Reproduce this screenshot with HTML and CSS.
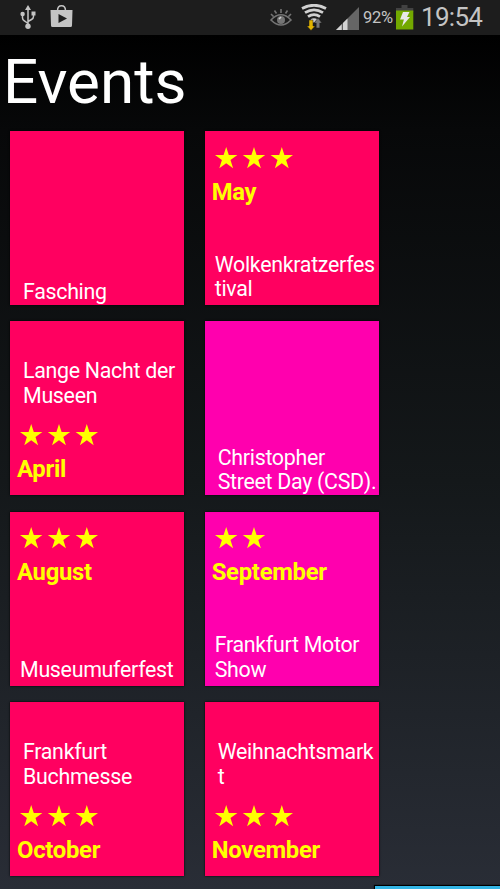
FILE: index.html
```html
<!DOCTYPE html>
<html lang="de">
<head>
<meta charset="utf-8">
<title>Events</title>
<link rel="stylesheet" href="styles.css">
</head>
<body>
<svg class="defs" width="0" height="0"><defs>
<path id="star" d="M11.2 0 L13.8 8 H22.4 L15.5 13 L18.1 21.2 L11.2 16.2 L4.3 21.2 L6.9 13 L0 8 H8.6Z"/>
<symbol id="stars3" viewBox="0 0 79 22"><use href="#star"/><use href="#star" x="27.8"/><use href="#star" x="55.6"/></symbol>
<symbol id="stars2" viewBox="0 0 79 22"><use href="#star"/><use href="#star" x="27.8"/></symbol>
</defs></svg>
<header class="status">
  <svg class="usb" width="16" height="25" viewBox="0 0 16 25" fill="none" stroke="#c4c4c4" stroke-width="1.5"><path d="M8 4V22M2.5 9v4q0 2 2 3L8 18.5M13.5 8v3.5q0 2-2 3L8 16.5"/><path d="M8 0L11 5H5ZM11.5 6.5h4v4h-4Z" fill="#c4c4c4" stroke="none"/><circle cx="2.6" cy="9" r="2.2" fill="#c4c4c4" stroke="none"/><circle cx="8" cy="21.3" r="2.7" fill="#c4c4c4" stroke="none"/></svg>
  <svg class="bag" width="24" height="24" viewBox="0 0 24 24"><path d="M7.5 6Q7.5 .8 11.5 .8T15.5 6" fill="none" stroke="#c4c4c4" stroke-width="1.5"/><path d="M.5 5H22.5L22 20.5Q22 22 20.5 22H2.5Q1 22 1 20.5Z" fill="#c4c4c4"/><path d="M8.5 9L17 13.5L8.5 18Z" fill="#1d1d1d"/></svg>
  <svg class="eye" width="22" height="20" viewBox="0 0 22 20" fill="none" stroke="#747474" stroke-width="1.6"><path d="M1 12Q11 1.5 21 12Q11 22 1 12ZM11 1v4M4.5 2.5l2 3M17.5 2.5l-2 3M1 6l2.5 2.5M21 6l-2.5 2.5"/><circle cx="11" cy="12" r="4" fill="#747474" stroke="none"/><path d="M9 11l2-2" stroke="#ccc"/></svg>
  <svg class="wifi" width="26" height="27" viewBox="0 0 26 27"><g fill="none" stroke="#d0d0d0" stroke-width="2.8"><path d="M1 4.5Q13-2 25 4.5M4 8.6Q13 3 22 8.6M7 12.6Q13 8.6 19 12.6"/></g><path d="M9.5 15.2Q13 13.2 16.5 15.2L13 19Z" fill="#d0d0d0"/><path d="M8 16h4v6h2.2L10 26.5L5.8 22H8Z" fill="#e2b400" stroke="#1d1d1d" stroke-width=".5"/><path d="M15.2 24v-5h-2.2l4-5 4 5h-2.2v5Z" fill="#777" stroke="#1d1d1d" stroke-width=".5"/></svg>
  <svg class="signal" width="23" height="23" viewBox="0 0 23 23"><path d="M23 0V23H0Z" fill="#666"/><path d="M11.5 11.5V23H0Z" fill="#d4d4d4"/><path d="M6.3 16v7" stroke="#1d1d1d" stroke-width=".8"/></svg>
  <span class="percent">92%</span>
  <svg class="battery" width="18" height="25" viewBox="0 0 18 25"><path d="M5.5 0h6v3h-6ZM0 3h17.3v4H0Z" fill="#424242"/><path d="M0 5.5h17.3V24.5H0Z" fill="#73a900"/><path d="M7 7h6.5l-2.5 5H14L6 21.5l1.9-7H4Z" fill="#e8e8e8"/></svg>
  <time class="clock">19:54</time>
</header>
<h1 class="title">Events</h1>
<main class="grid">
  <section class="tile"><p class="label low">Fasching</p></section>
  <section class="tile rated"><svg class="stars"><use href="#stars3"/></svg><h2 class="month">May</h2><p class="label near">Wolkenkratzerfes<br>tival</p></section>
  <section class="tile text-first"><p class="label">Lange Nacht der<br>Museen</p><svg class="stars"><use href="#stars3"/></svg><h2 class="month">April</h2></section>
  <section class="tile magenta"><p class="label low">Christopher<br>Street Day (CSD).</p></section>
  <section class="tile rated"><svg class="stars"><use href="#stars3"/></svg><h2 class="month">August</h2><p class="label near">Museumuferfest</p></section>
  <section class="tile magenta rated"><svg class="stars"><use href="#stars2"/></svg><h2 class="month">September</h2><p class="label near">Frankfurt Motor<br>Show</p></section>
  <section class="tile text-first"><p class="label">Frankfurt<br>Buchmesse</p><svg class="stars"><use href="#stars3"/></svg><h2 class="month">October</h2></section>
  <section class="tile text-first"><p class="label">Weihnachtsmark<br>t</p><svg class="stars"><use href="#stars3"/></svg><h2 class="month">November</h2></section>
</main>
<div class="edge"></div>
</body>
</html>
```
FILE: styles.css
```css
* { box-sizing: border-box; margin: 0; padding: 0; }
body {
  width: 500px;
  height: 889px;
  overflow: hidden;
  display: flex;
  flex-direction: column;
  font-family: Roboto, sans-serif;
  color: #fff;
  background: linear-gradient(#000 35px, #070809 130px, #14181a 480px, #292d36 889px);
}
.defs { position: absolute; }
svg { display: block; flex: none; }
.status {
  height: 35px;
  flex: none;
  display: flex;
  align-items: flex-start;
  background: #1d1d1d;
  color: #c4c4c4;
}
.usb { margin: 5px 0 0 20px; }
.bag { margin: 5px 0 0 14px; }
.eye { margin: 8px 0 0 196px; }
.wifi { margin: 4px 0 0 9px; }
.signal { margin: 7px 0 0 9px; }
.percent { margin: 8px 0 0 4px; width: 30px; font-size: 16.5px; line-height: 20px; white-space: nowrap; letter-spacing: -.3px; }
.battery { margin: 5px 0 0 3px; }
.clock { margin: 2px 0 0 7px; font-size: 26px; line-height: 30px; white-space: nowrap; letter-spacing: -.7px; }
.title {
  height: 96px;
  flex: none;
  padding: 10px 0 0 3px;
  font-size: 62px;
  line-height: 73px;
  font-weight: 400;
}
.grid {
  display: grid;
  grid-template-columns: 174px 174px;
  grid-auto-rows: 174px;
  gap: 16.4px 20.7px;
  padding-left: 10px;
}
.tile {
  display: flex;
  flex-direction: column;
  background: #ff0060;
  box-shadow: 0 0 2px #000;
}
.magenta { background: #ff00ae; }
.label { padding-left: 13px; font-size: 21.4px; line-height: 24.4px; white-space: nowrap; letter-spacing: -.3px; }
.low { margin-top: auto; padding-bottom: .5px; }
.near { margin-top: auto; padding-left: 10px; padding-bottom: 3.5px; }
.text-first { padding-top: 38px; }
.stars { width: 79px; height: 22px; margin-left: 10px; fill: #ff0; }
.rated .stars { margin-top: 15.5px; }
.text-first .stars { margin-top: 16px; }
.month { margin: 9px 0 0 7px; font-size: 23.8px; line-height: 28px; font-weight: 700; color: #ff0; letter-spacing: -.25px; }
.edge {
  position: absolute;
  left: 375px;
  top: 886px;
  width: 125px;
  height: 3px;
  background: #33b5e5;
  box-shadow: 0 0 1px 1px #000;
}
```
